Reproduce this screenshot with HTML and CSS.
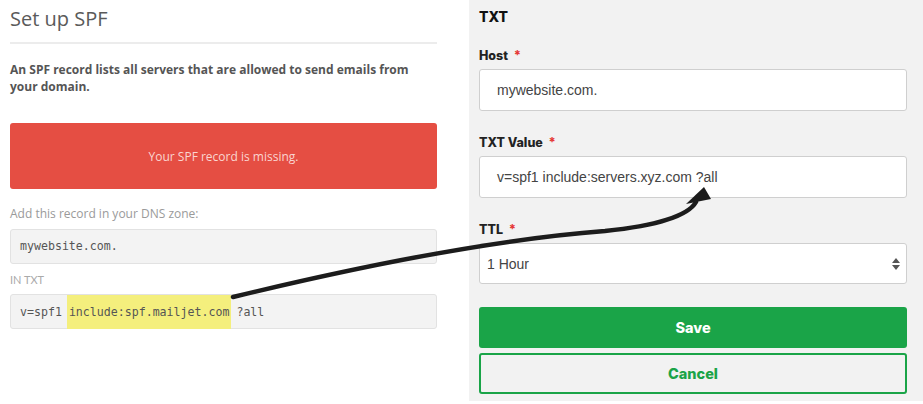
FILE: index.html
```html
<!DOCTYPE html>
<html lang="en">
<head>
    <meta charset="UTF-8">
    <meta name="viewport" content="width=device-width, initial-scale=1.0">
    <title>Set up SPF</title>
    <link rel="stylesheet" href="styles.css">
</head>
<body>
    <div class="page">
        <section class="spf">
            <h1>Set up SPF</h1>
            <p class="lead">An SPF record lists all servers that are allowed to send emails from your domain.</p>

            <div class="alert">Your SPF record is missing.</div>

            <p class="hint">Add this record in your DNS zone:</p>
            <div class="record">mywebsite.com.</div>
            <p class="type">IN TXT</p>
            <div class="record">v=spf1 <mark>include:spf.mailjet.com</mark> ?all</div>
        </section>

        <section class="dns">
            <h2>TXT</h2>

            <div class="field">
                <label>Host <span class="req">*</span></label>
                <div class="input">mywebsite.com.</div>
            </div>

            <div class="field">
                <label>TXT Value <span class="req">*</span></label>
                <div class="input">v=spf1 include:servers.xyz.com ?all</div>
            </div>

            <div class="field">
                <label>TTL <span class="req">*</span></label>
                <div class="input select">
                    <span>1 Hour</span>
                    <svg width="8" height="12" viewBox="0 0 8 12">
                        <path d="M4 0 L8 5 L0 5 Z M0 7 L8 7 L4 12 Z" fill="#555"/>
                    </svg>
                </div>
            </div>

            <div class="actions">
                <a href="#" class="button save">Save</a>
                <a href="#" class="button cancel">Cancel</a>
            </div>
        </section>

        <!-- arrow drawn over both panels -->
        <svg class="arrow" width="923" height="404" viewBox="0 0 923 404">
            <path d="M233 297 Q 460 242 605 231 C 655 226 688 216 696 202" fill="none" stroke="#1c1c1c" stroke-width="4.5" stroke-linecap="round"/>
            <polygon points="704,187 686,204 711,199" fill="#1c1c1c"/>
        </svg>
    </div>
</body>
</html>
```

FILE: styles.css
```css
body {
    margin: 0;
    padding: 0;
    background: #fff;
}
.page {
    position: relative;
    display: flex;
    width: 923px;
    height: 404px;
}
.spf {
    width: 427px;
    padding: 0 32px 0 10px;
    font-family: "Open Sans", sans-serif;
    color: #555;
}
h1 {
    margin: 0;
    padding: 4px 0 8px;
    font-size: 20px;
    font-weight: 400;
    line-height: 30px;
    color: #5a5a5a;
    border-bottom: 2px solid #ececec;
}
.lead {
    margin: 17px 0 0;
    font-size: 12px;
    font-weight: 700;
    line-height: 17px;
    color: #555;
}
.alert {
    margin-top: 28px;
    height: 66px;
    display: flex;
    align-items: center;
    justify-content: center;
    background: #e54e43;
    border-radius: 3px;
    color: #fad5d1;
    font-size: 12px;
}
.hint {
    margin: 17px 0 0;
    font-size: 12px;
    line-height: 16px;
    color: #9a9a9a;
}
.type {
    margin: 9px 0 0;
    font-family: Lato, sans-serif;
    font-size: 11px;
    line-height: 14px;
    color: #aaa;
}
.record {
    margin-top: 7px;
    height: 33px;
    padding-left: 9px;
    background: #f3f3f3;
    border: 1px solid #e2e2e2;
    border-radius: 3px;
    font-family: "DejaVu Sans Mono", monospace;
    font-size: 11.6px;
    line-height: 33px;
    color: #555;
    white-space: pre;
}
.record mark {
    display: inline-block;
    margin: 0 -2px;
    padding: 0 2px;
    background: #f4ef7d;
    color: #555;
    line-height: 34px;
}
.dns {
    flex: 1;
    margin-bottom: 3px;
    padding: 8px 16px 0 10px;
    background: #f2f2f2;
    font-family: Inter, sans-serif;
}
h2 {
    margin: 0 0 22px;
    font-size: 14px;
    font-weight: 800;
    line-height: 18px;
    color: #111;
}
.field + .field {
    margin-top: 24px;
}
label {
    display: block;
    margin-bottom: 5px;
    font-size: 12.5px;
    font-weight: 800;
    line-height: 16px;
    color: #222;
}
.req {
    margin-left: 3px;
    color: #e53935;
}
.input {
    height: 40px;
    padding-left: 17px;
    background: #fff;
    border: 1px solid #cfcfcf;
    border-radius: 3px;
    font-family: "Liberation Sans", Arial, sans-serif;
    font-size: 14px;
    line-height: 40px;
    color: #444;
}
.select {
    display: flex;
    align-items: center;
    justify-content: space-between;
    height: 39px;
    padding: 0 6px 0 7px;
}
.actions {
    margin-top: 23px;
    display: flex;
    flex-direction: column;
    gap: 5px;
}
.button {
    display: flex;
    align-items: center;
    justify-content: center;
    height: 41px;
    box-sizing: border-box;
    border-radius: 3px;
    font-size: 14.5px;
    font-weight: 800;
    text-decoration: none;
}
.save {
    background: #1aa448;
    color: #fff;
}
.cancel {
    border: 2px solid #1aa448;
    color: #1aa448;
}
.arrow {
    position: absolute;
    left: 0;
    top: 0;
    pointer-events: none;
}
```
